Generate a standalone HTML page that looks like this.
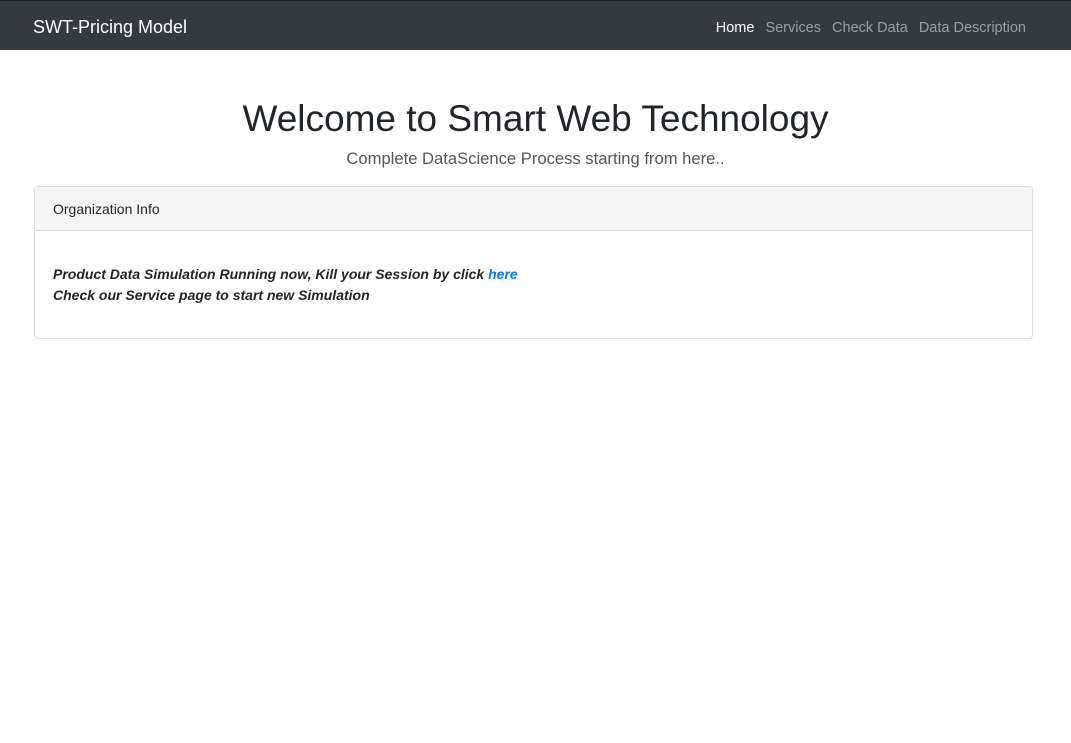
<!DOCTYPE html>
<html><head><style>
body{margin:0;font-family:"Liberation Sans",sans-serif;background:#fff;color:#212529;width:1071px;height:743px;overflow:hidden}
.nav{height:50px;background:#343a40;border-top:1px solid #222;box-sizing:border-box;position:relative}
.brand{position:absolute;left:33px;top:16px;color:#fff;font-size:18px}
.links{position:absolute;right:45px;top:19px;font-size:14.5px}
.links span{color:rgba(255,255,255,.5);margin-left:11px}
.links span.a{color:#fff}
h1{margin:0;position:absolute;top:98px;width:100%;text-align:center;font-size:37px;font-weight:500}
.sub{position:absolute;top:149px;width:100%;text-align:center;font-size:16.6px;font-weight:300;color:#555}
.card{position:absolute;left:34px;top:186px;width:997px;height:151px;border:1px solid #dcdcdc;border-radius:4px}
.ch{height:43px;background:#f5f5f5;border-bottom:1px solid #dcdcdc;font-size:14px;line-height:44px;padding-left:18px}
.cb{padding:33px 18px;font-size:14px;font-weight:bold;font-style:italic;line-height:21px}
.cb a{color:#007bff;text-decoration:none}
</style></head><body>
<div class="nav"><div class="brand">SWT-Pricing Model</div>
<div class="links"><span class="a">Home</span><span>Services</span><span>Check Data</span><span>Data Description</span></div></div>
<h1>Welcome to Smart Web Technology</h1>
<div class="sub">Complete DataScience Process starting from here..</div>
<div class="card"><div class="ch">Organization Info</div>
<div class="cb">Product Data Simulation Running now, Kill your Session by click <a>here</a><br>Check our Service page to start new Simulation</div></div>
</body></html>
